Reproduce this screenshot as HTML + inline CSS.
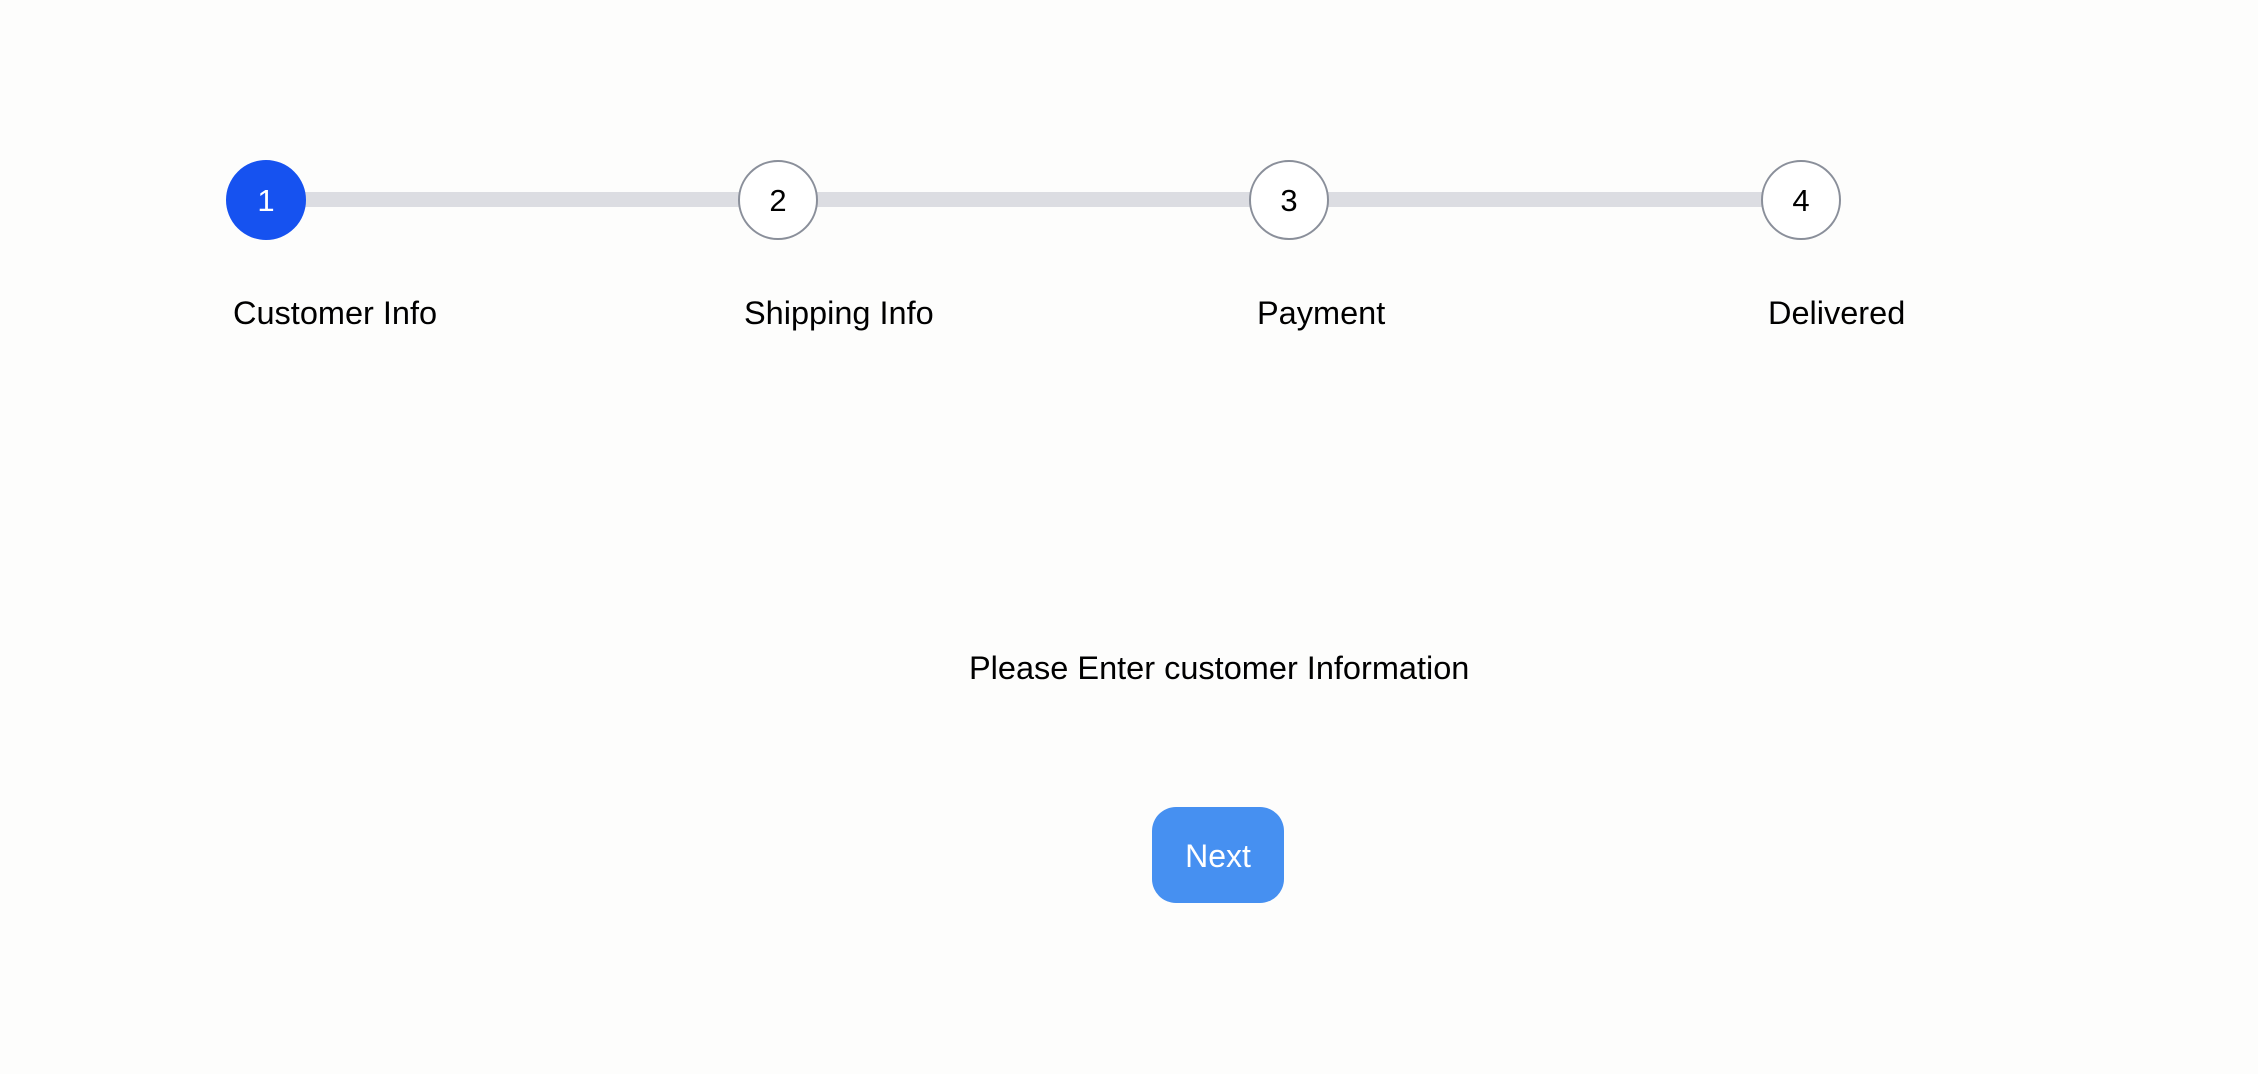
<!DOCTYPE html>
<html><head><style>
body{margin:0;width:2258px;height:1074px;background:#fdfdfc;font-family:"Liberation Sans",sans-serif;position:relative;overflow:hidden;color:#000}
.line{position:absolute;left:266px;width:1535px;top:192px;height:15px;background:#dcdde2}
.c{position:absolute;top:160px;width:80px;height:80px;border-radius:50%;box-sizing:border-box;border:2px solid #8a8f9a;background:#fff;font-size:31px;line-height:78px;text-align:center}
.c1{background:#1652f0;border-color:#1652f0;color:#fff}
.l{position:absolute;top:295px;font-size:32.5px;line-height:36px;white-space:nowrap}
.msg{position:absolute;left:969px;top:650px;font-size:32.5px;line-height:36px;white-space:nowrap}
.btn{position:absolute;left:1152px;top:807px;width:132px;height:96px;border-radius:24px;background:#4690f1;color:#fff;font-size:32px;line-height:98px;text-align:center}
</style></head><body>
<div class="line"></div>
<div class="c c1" style="left:226px">1</div>
<div class="c" style="left:738px">2</div>
<div class="c" style="left:1249px">3</div>
<div class="c" style="left:1761px">4</div>
<div class="l" style="left:233px">Customer Info</div>
<div class="l" style="left:744px">Shipping Info</div>
<div class="l" style="left:1257px">Payment</div>
<div class="l" style="left:1768px">Delivered</div>
<div class="msg">Please Enter customer Information</div>
<div class="btn">Next</div>
</body></html>
